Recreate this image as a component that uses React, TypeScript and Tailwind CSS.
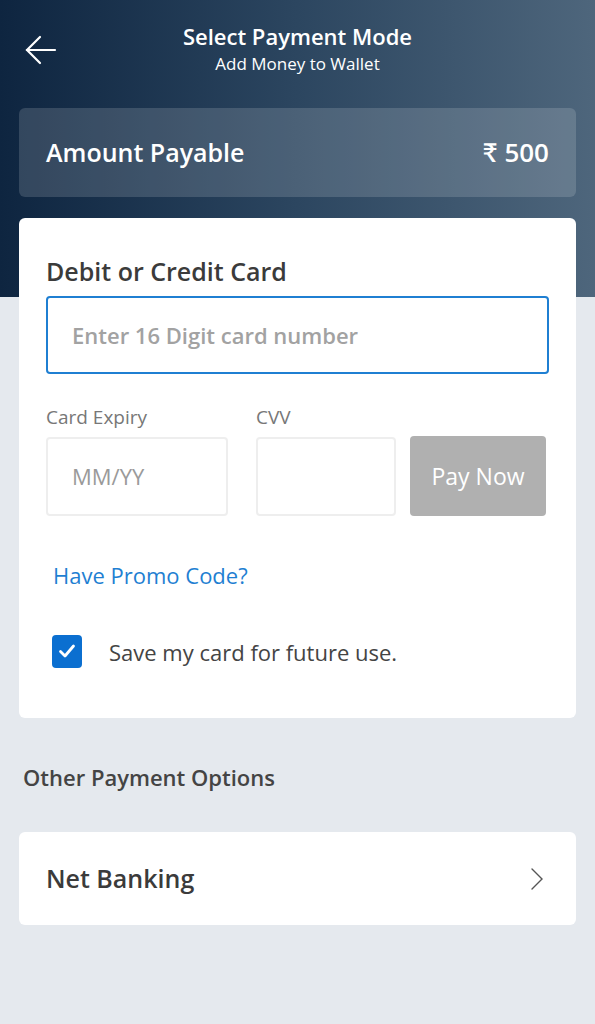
import React, { useState } from 'react';

const font = { fontFamily: '"Open Sans", Lato, sans-serif' };

const BackArrow = () => (
  <svg width="34" height="34" viewBox="0 0 34 34" fill="none" stroke="white" strokeWidth="2.2" strokeLinecap="round">
    <path d="M31 17H3" />
    <path d="M16 4L3 17l13 13" />
  </svg>
);

const Chevron = () => (
  <svg width="14" height="24" viewBox="0 0 14 24" fill="none" stroke="#555" strokeWidth="1.4" strokeLinecap="round">
    <path d="M2 2l10 10-10 10" />
  </svg>
);

const App = () => {
  const [saveCard, setSaveCard] = useState(true);

  return (
    <div className="min-h-[1024px] w-[595px] bg-[#e5e9ee] relative" style={font}>
      {/* Header */}
      <div className="h-[297px] bg-gradient-to-r from-[#0e2540] via-[#2c4660] to-[#4e667c] px-[19px] pt-[21px]">
        <div className="flex items-start">
          <button className="w-[40px] pt-[12px] pl-[5px]">
            <BackArrow />
          </button>
          <div className="flex-1 flex flex-col items-center -ml-[40px] text-white">
            <div className="text-[22px] font-semibold leading-[30px]">Select Payment Mode</div>
            <div className="text-[17px] leading-[22px] mt-[2px]">Add Money to Wallet</div>
          </div>
        </div>
        <div className="mt-[33px] h-[89px] rounded-[6px] bg-white/15 flex items-center justify-between px-[27px] text-white">
          <span className="text-[25px] font-semibold">Amount Payable</span>
          <span className="text-[26px] font-semibold">₹ 500</span>
        </div>
      </div>

      {/* Card form */}
      <div className="-mt-[79px] mx-[19px] bg-white rounded-[6px] px-[27px] pt-[36px] pb-[49px]">
        <div className="text-[25px] font-semibold text-[#3b3b3b] leading-[34px]">Debit or Credit Card</div>
        <div className="mt-[8px] h-[78px] border-2 border-[#1f7fd2] rounded-[4px] flex items-center px-[24px]">
          <span className="text-[22px] text-[#a2a2a2] font-semibold">Enter 16 Digit card number</span>
        </div>

        <div className="flex mt-[30px] gap-[28px] items-end">
          <div className="w-[182px]">
            <div className="text-[19px] text-[#777] leading-[26px]">Card Expiry</div>
            <div className="mt-[7px] h-[79px] border-2 border-[#eeeeee] rounded-[4px] flex items-center px-[24px]">
              <span className="text-[22px] text-[#9a9a9a]">MM/YY</span>
            </div>
          </div>
          <div className="w-[140px]">
            <div className="text-[19px] text-[#777] leading-[26px]">CVV</div>
            <div className="mt-[7px] h-[79px] border-2 border-[#eeeeee] rounded-[4px]" />
          </div>
          <button className="w-[136px] h-[80px] -ml-[14px] bg-[#b0b0b0] rounded-[4px] text-white text-[23px]">
            Pay Now
          </button>
        </div>

        <div className="mt-[44px] pl-[7px] text-[22px] text-[#1f7fd2] leading-[30px]">Have Promo Code?</div>

        <div className="mt-[43px] pl-[6px] flex items-center gap-[27px]">
          <button
            onClick={() => setSaveCard(!saveCard)}
            className="w-[30px] h-[33px] rounded-[4px] bg-[#0b6fd0] flex items-center justify-center"
          >
            {saveCard && (
              <svg width="20" height="20" viewBox="0 0 20 20" fill="none" stroke="white" strokeWidth="2.8" strokeLinecap="round" strokeLinejoin="round">
                <path d="M3.5 10.5l4.5 4.5 8.5-10" />
              </svg>
            )}
          </button>
          <span className="text-[22px] text-[#444] pt-[3px]">Save my card for future use.</span>
        </div>
      </div>

      {/* Other options */}
      <div className="mt-[44px] px-[23px] text-[22px] font-semibold text-[#444] leading-[30px]">Other Payment Options</div>
      <div className="mt-[40px] mx-[19px] h-[93px] bg-white rounded-[6px] flex items-center justify-between pl-[27px] pr-[32px]">
        <span className="text-[25px] font-semibold text-[#3b3b3b]">Net Banking</span>
        <Chevron />
      </div>
    </div>
  );
};

export default App;
